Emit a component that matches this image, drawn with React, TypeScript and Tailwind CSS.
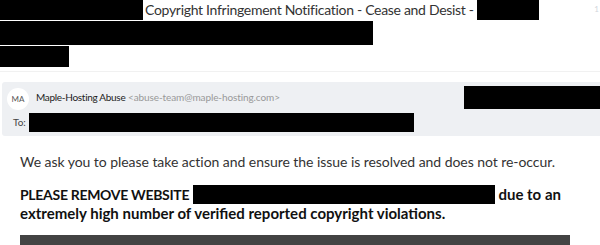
export default function App() {
  return (
    <div className="w-[600px] h-[245px] overflow-hidden bg-white font-['Lato',sans-serif] text-[#333]">
      {/* Subject */}
      <div className="flex items-start h-[20px]">
        <div className="w-[143px] h-[20px] bg-black" />
        <span className="ml-[2px] text-[14px] leading-[20px] tracking-[-0.3px]">
          Copyright Infringement Notification - Cease and Desist -
        </span>
        <div className="ml-[3px] w-[62px] h-[20px] bg-black" />
        <span className="ml-auto mr-[1px] mt-[4px] text-[8px] leading-[10px] text-gray-300">1</span>
      </div>
      <div className="mt-[1px] w-[373px] h-[24px] bg-black" />
      <div className="mt-[1px] w-[69px] h-[21px] bg-black" />
      <div className="mt-[4px] border-t border-[#f1f1f1]" />

      {/* Sender panel */}
      <div className="mt-[10px] ml-[2px] rounded-l-[3px] bg-[#eef0f3] pt-[4px] pb-[4px]">
        <div className="flex items-start">
          <div className="ml-[5px] mt-[2px] w-[22px] h-[22px] rounded-full bg-white flex items-center justify-center text-[8px] text-[#555]">
            MA
          </div>
          <div className="ml-[7px] mt-[5px] text-[10px] leading-[13px]">
            <span className="text-[#222] tracking-[-0.3px]">Maple-Hosting Abuse</span>{" "}
            <span className="text-[#999] tracking-[-0.1px]">&lt;abuse-team@maple-hosting.com&gt;</span>
          </div>
          <div className="ml-auto w-[136px] h-[23px] bg-black" />
        </div>
        <div className="mt-[3px] flex items-center">
          <span className="ml-[11px] text-[10px] leading-[19px] text-[#444]">To:</span>
          <div className="ml-[3px] w-[385px] h-[19px] bg-black" />
        </div>
      </div>

      {/* Body */}
      <div className="pl-[20px] pr-[30px]">
        <p className="mt-[16px] text-[14px] leading-[20px] tracking-[-0.05px] text-[#333]">
          We ask you to please take action and ensure the issue is resolved and does not re-occur.
        </p>
        <p className="mt-[13px] text-[15px] leading-[18px] font-bold text-[#111]">
          <span className="text-[14px] tracking-[-0.3px]">PLEASE REMOVE WEBSITE</span>{" "}
          <span className="inline-block align-top w-[302px] h-[19px] mb-[-1px] bg-black" />{" "}
          due to an extremely high number of verified reported copyright violations.
        </p>
      </div>
      <div className="mt-[13px] mx-[20px] w-[550px] h-[20px] bg-[#434343]" />
    </div>
  )
}
